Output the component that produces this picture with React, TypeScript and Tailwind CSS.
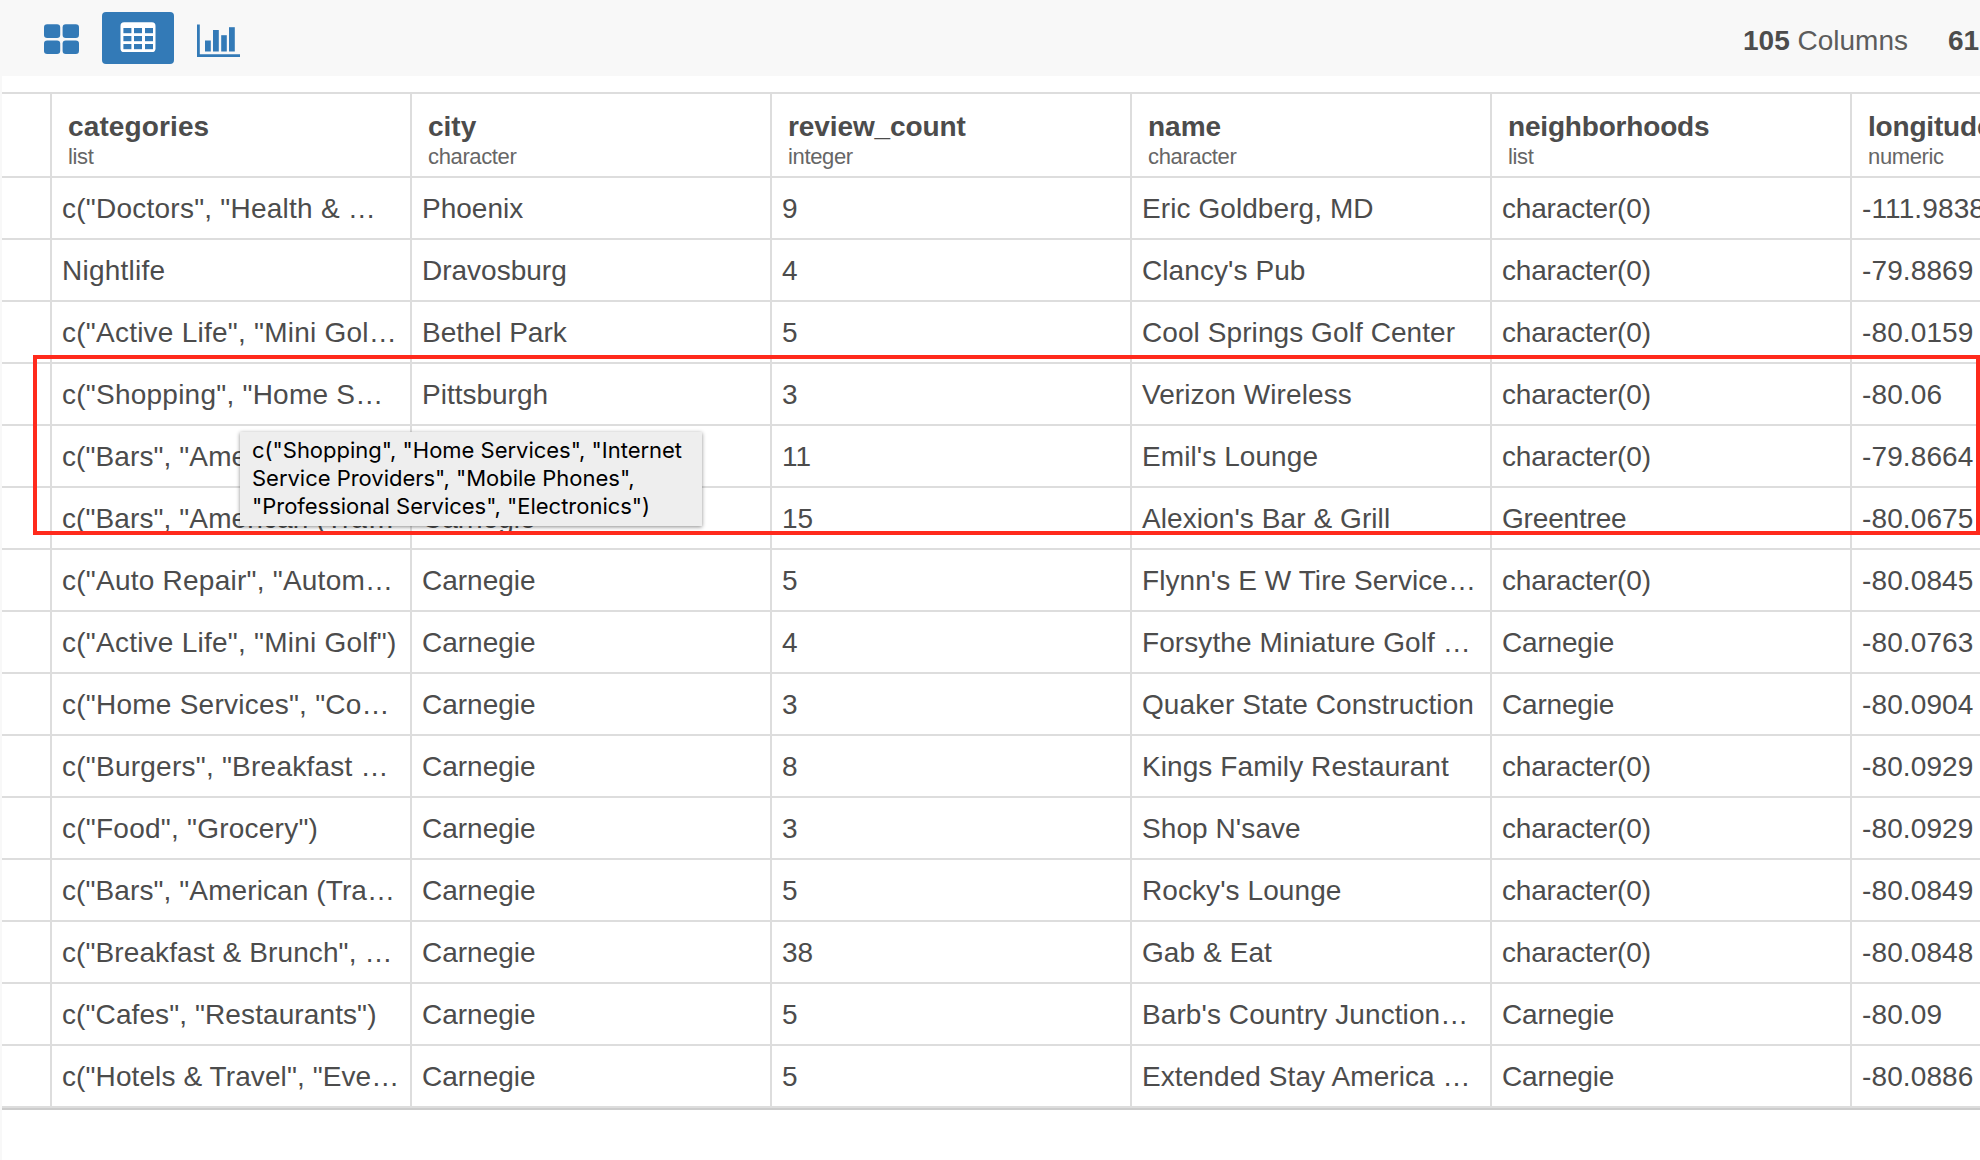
const columns = [
  { name: "categories", type: "list", head: "tracking-[0.12px]", cell: "tracking-[0.24px]" },
  { name: "city", type: "character", head: "tracking-normal", cell: "tracking-normal" },
  { name: "review_count", type: "integer", head: "tracking-[-0.1px]", cell: "tracking-normal" },
  { name: "name", type: "character", head: "tracking-normal", cell: "tracking-[0.08px]" },
  { name: "neighborhoods", type: "list", head: "tracking-[-0.18px]", cell: "tracking-[-0.18px]" },
  { name: "longitude", type: "numeric", head: "tracking-[-0.18px]", cell: "tracking-[0.12px]" },
];

const rows = [
  ['c("Doctors", "Health & …', "Phoenix", "9", "Eric Goldberg, MD", "character(0)", "-111.9838"],
  ["Nightlife", "Dravosburg", "4", "Clancy's Pub", "character(0)", "-79.8869"],
  ['c("Active Life", "Mini Gol…', "Bethel Park", "5", "Cool Springs Golf Center", "character(0)", "-80.0159"],
  ['c("Shopping", "Home S…', "Pittsburgh", "3", "Verizon Wireless", "character(0)", "-80.06"],
  ['c("Bars", "American (Tra…', "Carnegie", "11", "Emil's Lounge", "character(0)", "-79.8664"],
  ['c("Bars", "American (Tra…', "Carnegie", "15", "Alexion's Bar & Grill", "Greentree", "-80.0675"],
  ['c("Auto Repair", "Autom…', "Carnegie", "5", "Flynn's E W Tire Service…", "character(0)", "-80.0845"],
  ['c("Active Life", "Mini Golf")', "Carnegie", "4", "Forsythe Miniature Golf …", "Carnegie", "-80.0763"],
  ['c("Home Services", "Co…', "Carnegie", "3", "Quaker State Construction", "Carnegie", "-80.0904"],
  ['c("Burgers", "Breakfast …', "Carnegie", "8", "Kings Family Restaurant", "character(0)", "-80.0929"],
  ['c("Food", "Grocery")', "Carnegie", "3", "Shop N'save", "character(0)", "-80.0929"],
  ['c("Bars", "American (Tra…', "Carnegie", "5", "Rocky's Lounge", "character(0)", "-80.0849"],
  ['c("Breakfast & Brunch", …', "Carnegie", "38", "Gab & Eat", "character(0)", "-80.0848"],
  ['c("Cafes", "Restaurants")', "Carnegie", "5", "Barb's Country Junction…", "Carnegie", "-80.09"],
  ['c("Hotels & Travel", "Eve…', "Carnegie", "5", "Extended Stay America …", "Carnegie", "-80.0886"],
];

function cellTracking(value: string, column: number) {
  if (column === 0 && /Tra|Brunch|Cafes/.test(value)) return "tracking-[0.1px]";
  return columns[column].cell;
}

function GridIcon() {
  return (
    <svg width="36" height="30" viewBox="0 0 36 30" fill="#337ab7">
      <rect x="0" y="0.3" width="16.2" height="13.7" rx="3.2" />
      <rect x="18.6" y="0.3" width="16.4" height="13.7" rx="3.2" />
      <rect x="0" y="16.4" width="16.2" height="13.6" rx="3.2" />
      <rect x="18.6" y="16.4" width="16.4" height="13.6" rx="3.2" />
    </svg>
  );
}

function TableIcon() {
  return (
    <svg width="36" height="30" viewBox="0 0 36 30">
      <rect x="0.5" y="0.3" width="35" height="29.7" rx="3.6" fill="#fff" />
      {[6, 14, 22].map((y) =>
        [3.4, 14, 25].map((x) => <rect key={`${x}-${y}`} x={x} y={y} width="8" height="5.2" fill="#337ab7" />)
      )}
    </svg>
  );
}

function ChartIcon() {
  return (
    <svg width="44" height="34" viewBox="0 0 44 34" fill="#337ab7">
      <path d="M0 0.5h2.8v29.8H43V33H0z" />
      <rect x="8" y="16.5" width="5.8" height="11" />
      <rect x="16" y="6" width="5.8" height="21.5" />
      <rect x="24.2" y="11.2" width="5.6" height="16.3" />
      <rect x="32" y="3.2" width="5.8" height="24.3" />
    </svg>
  );
}

function Toolbar() {
  return (
    <header className="flex h-[76px] bg-[#f8f8f8]">
      <div className="flex pt-3">
        <button className="ml-[44px] flex h-[52px] w-9 items-start pt-3">
          <GridIcon />
        </button>
        <button className="ml-[22px] flex h-[52px] w-[72px] items-start justify-center rounded bg-[#337ab7] pt-[10px]">
          <TableIcon />
        </button>
        <button className="ml-[23px] flex h-[52px] w-11 items-start pt-3">
          <ChartIcon />
        </button>
      </div>
      <div className="ml-[1502px] flex shrink-0 items-start gap-10 pt-[25px] text-[28px] leading-8 whitespace-nowrap">
        <span>
          <b>105</b> <span className="text-[#5c5c5c]">Columns</span>
        </span>
        <b>61</b>
      </div>
    </header>
  );
}

export default function App() {
  return (
    <div className="relative flex h-[1160px] w-[1980px] flex-col overflow-hidden bg-white font-['Liberation_Sans',Arial,sans-serif] text-[#4c4c4c]">
      <Toolbar />
      <main className="flex-1 overflow-hidden border-l-2 border-[#f8f8f8] pt-4">
        <div className="w-[2210px] border-t-2 border-b-2 border-t-[#ddd] border-b-[#ccc]">
          <div className="flex h-[84px] border-b-2 border-[#ddd]">
            <div className="w-[50px] border-r-2 border-[#ddd]" />
            {columns.map((c) => (
              <div key={c.name} className="w-[360px] border-r-2 border-[#ddd] pt-[17px] pl-4 whitespace-nowrap">
                <div className={`text-[28px] leading-8 font-bold ${c.head}`}>{c.name}</div>
                <div className="text-[22px] leading-7 tracking-[-0.36px] text-[#666]">{c.type}</div>
              </div>
            ))}
          </div>
          {rows.map((row, i) => (
            <div key={i} className="flex h-[62px] border-b-2 border-[#ddd]">
              <div className="w-[50px] border-r-2 border-[#ddd]" />
              {row.map((value, j) => (
                <div
                  key={j}
                  className={`w-[360px] border-r-2 border-[#ddd] pt-[15px] pl-[10px] text-[28px] leading-8 whitespace-nowrap ${cellTracking(value, j)}`}
                >
                  {value}
                </div>
              ))}
            </div>
          ))}
        </div>
      </main>
      <div className="absolute top-[355px] left-[33px] h-[180px] w-[1947px] border-4 border-[#ff2a1c]" />
      <div className="absolute top-[432px] left-[240px] h-[94px] w-[462px] bg-[#eee] pt-1 pl-3 font-[Inter,sans-serif] text-[22px] leading-7 tracking-[-0.02px] whitespace-nowrap text-black shadow-[0_1px_4px_rgba(0,0,0,0.45)]">
        <div>c("Shopping", "Home Services", "Internet</div>
        <div>Service Providers", "Mobile Phones",</div>
        <div>"Professional Services", "Electronics")</div>
      </div>
    </div>
  );
}
